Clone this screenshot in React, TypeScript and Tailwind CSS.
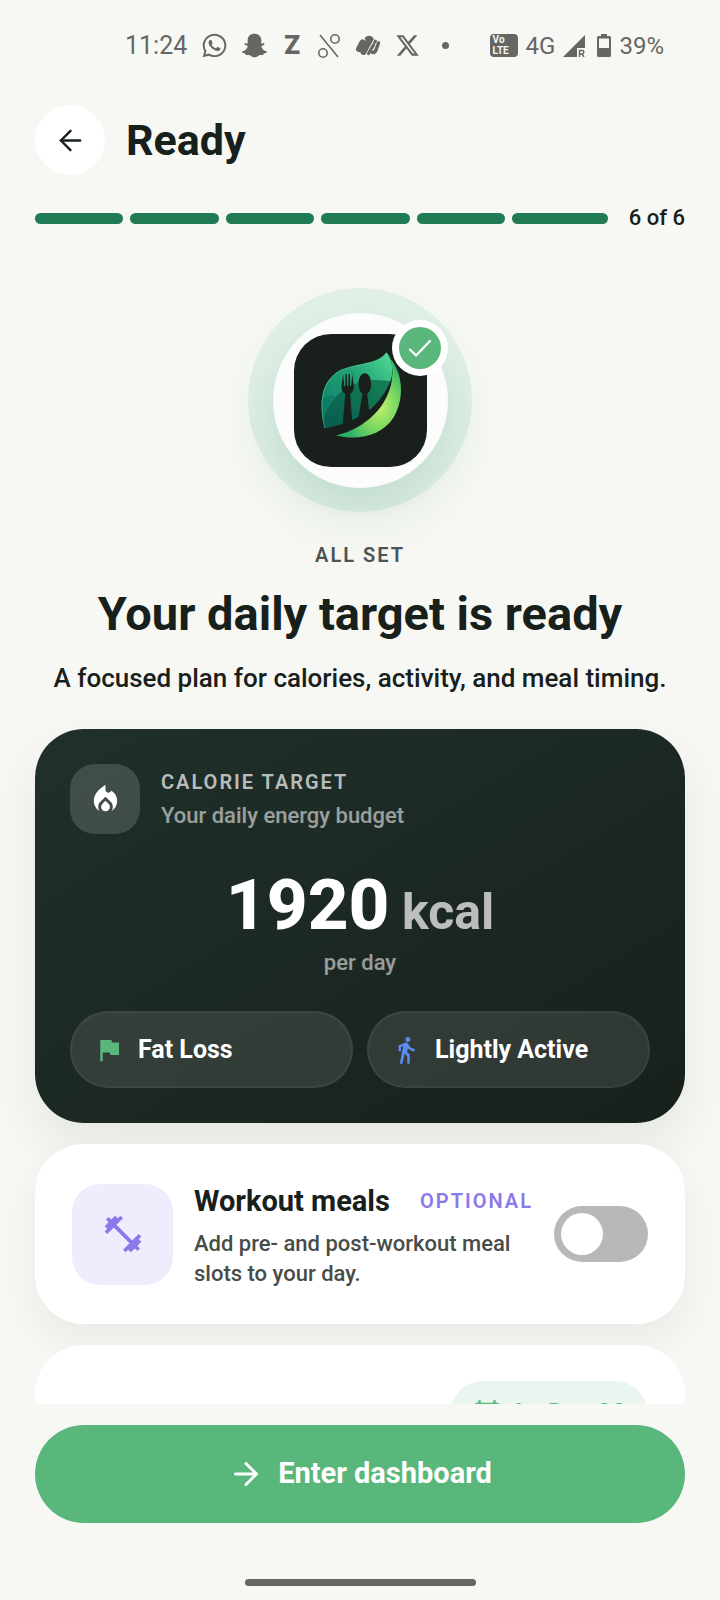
import { useState } from "react"
import type { ReactNode } from "react"
import { ArrowLeft, ArrowRight } from "lucide-react"
import { FaSnapchatGhost, FaWhatsapp } from "react-icons/fa"
import { FaXTwitter } from "react-icons/fa6"
import {
  MdDirectionsWalk,
  MdFitnessCenter,
  MdFlag,
  MdLocalFireDepartment,
  MdOutlineCalendarToday,
} from "react-icons/md"

const TOTAL_STEPS = 6
const CURRENT_STEP = 6

export default function App() {
  const [workoutMeals, setWorkoutMeals] = useState(false)

  return (
    <div className="flex h-screen flex-col overflow-hidden bg-[#f7f8f3] font-['Roboto',sans-serif] text-[#18201c]">
      <StatusBar />

      <header className="px-[35px] pt-[14px]">
        <div className="flex items-center gap-[21px]">
          <button
            type="button"
            aria-label="Back"
            className="flex size-[70px] items-center justify-center rounded-full bg-white"
          >
            <ArrowLeft size={33} strokeWidth={1.75} />
          </button>
          <h1 className="text-[43px] leading-[54px] font-bold">Ready</h1>
        </div>

        <div className="mt-[30px] flex items-center gap-[21px]">
          <div className="grid flex-1 grid-cols-6">
            {Array.from({ length: TOTAL_STEPS }, (_, index) => (
              <div key={index} className="pr-[7px] last:pr-0">
                <div
                  className={`h-[11px] rounded-full ${index < CURRENT_STEP ? "bg-[#217c56]" : "bg-[#dfe5df]"}`}
                />
              </div>
            ))}
          </div>
          <span className="text-[22px] leading-[26px] font-medium">
            {CURRENT_STEP} of {TOTAL_STEPS}
          </span>
        </div>
      </header>

      <main className="min-h-0 flex-1 overflow-y-auto px-[35px] pt-[57px] [scrollbar-width:none]">
        <section className="flex flex-col items-center text-center">
          <HeroBadge />
          <p className="mt-[29px] text-[20px] leading-7 font-semibold tracking-widest text-[#4f5351]">
            ALL SET
          </p>
          <h2 className="mt-[18px] text-[47px] leading-[54px] font-bold">
            Your daily target is ready
          </h2>
          <p className="mt-5 text-[26px] leading-[34px] font-medium">
            A focused plan for calories, activity, and meal timing.
          </p>
        </section>

        <section className="mt-[34px] rounded-[49px] bg-linear-to-br from-[#20302a] to-[#18201c] p-[35px] text-white shadow-[0_24px_50px_rgba(24,32,28,0.08)]">
          <div className="flex items-center gap-[21px]">
            <span className="flex size-[70px] items-center justify-center rounded-[25px] bg-white/15">
              <MdLocalFireDepartment size={35} />
            </span>
            <div>
              <h3 className="text-[20px] leading-[33px] font-semibold tracking-widest text-white/70">
                CALORIE TARGET
              </h3>
              <p className="text-[22px] leading-[33px] font-medium text-white/55">
                Your daily energy budget
              </p>
            </div>
          </div>

          <p className="mt-9 text-center text-[71px] leading-[70px] font-extrabold">
            1920<span className="text-[50px] leading-none font-bold text-white/70"> kcal</span>
          </p>
          <p className="mt-2 text-center text-[22px] leading-[30px] font-medium text-white/55">
            per day
          </p>

          <div className="mt-[33px] grid grid-cols-2 gap-[14px]">
            <GoalPill
              icon={<MdFlag size={30} className="text-[#59b77b]" />}
              label="Fat Loss"
            />
            <GoalPill
              icon={<MdDirectionsWalk size={30} className="text-[#5b8def]" />}
              label="Lightly Active"
            />
          </div>
        </section>

        <section className="mt-[21px] flex items-center gap-[21px] rounded-[49px] border-2 border-white bg-white px-[35px] py-[33px] shadow-[0_20px_40px_rgba(24,32,28,0.06)]">
          <span className="flex size-[101px] shrink-0 items-center justify-center rounded-[28px] bg-[#efecfd] text-[#8b78ea]">
            <MdFitnessCenter size={44} />
          </span>
          <div className="min-w-0 flex-1 pt-1">
            <div className="flex items-center justify-between">
              <h3 id="workout-label" className="text-[29px] leading-9 font-bold">
                Workout meals
              </h3>
              <span className="text-[20px] leading-[26px] font-semibold tracking-widest text-[#8b78ea]">
                OPTIONAL
              </span>
            </div>
            <p className="mt-[10px] text-[22px] leading-[30px] font-medium text-[#474c49]">
              Add pre- and post-workout meal slots to your day.
            </p>
          </div>
          <button
            type="button"
            role="switch"
            aria-checked={workoutMeals}
            aria-labelledby="workout-label"
            onClick={() => setWorkoutMeals(!workoutMeals)}
            className={`flex h-14 w-[94px] shrink-0 items-center rounded-full px-[7px] ${workoutMeals ? "justify-end bg-[#59b77b]" : "justify-start bg-[#b7b9b7]"}`}
          >
            <span className="size-[42px] rounded-full bg-white" />
          </button>
        </section>

        <section className="mt-[21px] flex justify-end rounded-[49px] border-2 border-white bg-white px-[35px] pt-[34px] pb-[120px]">
          <span className="flex h-[66px] items-center gap-[14px] rounded-full bg-[#e9f5ee] px-[22px] text-[25px] font-bold text-[#59b77b]">
            <MdOutlineCalendarToday size={30} />
            by Dec 30
          </span>
        </section>
      </main>

      <footer className="px-[35px] pt-[21px] pb-[14px]">
        <button
          type="button"
          className="flex h-[98px] w-full items-center justify-center gap-[14px] rounded-full bg-[#59b77b] text-[29px] font-bold text-white"
        >
          <ArrowRight size={36} />
          Enter dashboard
        </button>
        <div className="mx-auto mt-14 h-[7px] w-[231px] rounded-full bg-[#666764]" />
      </footer>
    </div>
  )
}

function GoalPill({ icon, label }: { icon: ReactNode; label: string }) {
  return (
    <div className="flex h-[77px] items-center gap-[14px] rounded-full border-2 border-white/5 bg-white/10 px-[22px]">
      {icon}
      <span className="text-[25px] leading-8 font-bold">{label}</span>
    </div>
  )
}

function HeroBadge() {
  return (
    <div className="flex size-56 items-center justify-center rounded-full bg-linear-to-b from-[#e1f0e6] to-[#d6e9dd] shadow-[0_20px_40px_rgba(33,124,86,0.06)]">
      <div className="relative flex size-[175px] items-center justify-center rounded-full bg-[#fbfcfb] shadow-[0_14px_28px_rgba(33,124,86,0.10)]">
        <LeafLogo />
        <span className="absolute top-[7px] right-0 flex size-14 items-center justify-center rounded-full bg-white">
          <span className="flex size-[42px] items-center justify-center rounded-full bg-[#59b77b]">
            <svg viewBox="0 0 24 18" className="w-6" fill="none" stroke="white" strokeWidth="2.3" strokeLinecap="round" strokeLinejoin="round">
              <path d="M2 10.5 8 16.5 22 2" />
            </svg>
          </span>
        </span>
      </div>
    </div>
  )
}

function LeafLogo() {
  return (
    <svg viewBox="0 0 400 400" className="size-[133px] rounded-[37px] bg-[#19201c]">
      <defs>
        <linearGradient id="leaf" x1="0.9" y1="0.1" x2="0.1" y2="0.9">
          <stop offset="0" stopColor="#4fd692" />
          <stop offset="0.4" stopColor="#21a376" />
          <stop offset="1" stopColor="#0f7d66" />
        </linearGradient>
        <linearGradient id="shade" x1="0.9" y1="0" x2="0.1" y2="1">
          <stop offset="0" stopColor="#158055" />
          <stop offset="1" stopColor="#07594f" />
        </linearGradient>
        <radialGradient id="blade" cx="0.66" cy="0.62" r="0.55">
          <stop offset="0" stopColor="#c2f06c" />
          <stop offset="0.5" stopColor="#7bd962" />
          <stop offset="1" stopColor="#2fb068" />
        </radialGradient>
        <clipPath id="leaf-body">
          <path d="M93 284C76 228 76 156 122 120C166 84 252 98 278 55C294 76 300 98 292 138C262 214 206 262 93 284Z" />
        </clipPath>
      </defs>
      <g clipPath="url(#leaf-body)">
        <rect x="70" y="40" width="240" height="260" fill="url(#leaf)" />
        <path d="M86 264C100 210 140 152 220 140C250 136 280 140 310 146V300H80Z" fill="url(#shade)" />
        <path d="M80 200C90 190 110 184 124 188C100 210 90 240 86 270Z" fill="#0f7d66" />
      </g>
      <path d="M93 283C79 228 77 157 123 121C167 86 250 98 277 57" fill="none" stroke="#5fdca5" strokeWidth="2" opacity="0.7" />
      <g fill="#19201c">
        <path d="M148 120 151 157H154L155 120H159L160 157H163L164 120H168L169 157H172L175 120 180 156C181 168 177 176 169 180L177 290H145L154 180C146 176 142 168 143 156Z" />
        <path d="M213 118C225 118 232 134 232 150C232 164 227 175 220 180L230 262H192L206 180C199 175 194 164 194 150C194 134 201 118 213 118Z" />
        <path d="M292 136C262 214 206 262 93 284L126 306C230 292 296 216 300 130Z" />
      </g>
      <path d="M284 68C328 112 334 194 300 250C264 306 194 321 126 305C216 284 286 216 295 132C299 106 292 84 284 68Z" fill="url(#blade)" />
      <path d="M278 55C300 84 302 110 294 142C306 108 300 88 278 55Z" fill="#4fd692" />
    </svg>
  )
}

function StatusBar() {
  return (
    <div className="flex h-[91px] shrink-0 items-center justify-between pr-14 pl-[125px] text-[25px] text-[#666764]">
      <div className="flex items-center gap-[14px]">
        <span>11:24</span>
        <FaWhatsapp size={27} />
        <FaSnapchatGhost size={25} />
        <span className="w-[22px] text-center text-[26px] font-black">Z</span>
        <svg viewBox="0 0 24 24" className="size-6" fill="none" stroke="currentColor" strokeWidth="1.6">
          <path d="M3 1 21 23" />
          <circle cx="18" cy="5" r="4.2" />
          <circle cx="6" cy="19" r="4.2" />
        </svg>
        <svg viewBox="0 0 26 24" className="h-6 w-[26px]" fill="none" stroke="currentColor" strokeLinecap="round" strokeLinejoin="round">
          <path d="M4 15 7.5 8.5" strokeWidth="6" />
          <path d="M8.5 18 14 6" strokeWidth="6" />
          <path d="M11.5 4.5Q15 2.5 17 5L11 15.5" strokeWidth="3.5" />
          <path d="M13.5 19.5 18.5 11" strokeWidth="3.2" />
          <path d="M17.5 18.5Q20 18.5 21 16L23.5 9" strokeWidth="3.5" />
          <path d="M19.5 8.5 20.5 7" strokeWidth="3" />
        </svg>
        <FaXTwitter size={25} />
        <span className="ml-2 size-[7px] rounded-full bg-current" />
      </div>

      <div className="flex items-center gap-2 text-[24px]">
        <span className="flex h-[23px] w-7 flex-col rounded-[4px] bg-[#666764] pl-[3px] text-[10px] leading-[11px] font-bold text-[#f7f8f3]">
          <span>Vo</span>
          <span>LTE</span>
        </span>
        <span>4G</span>
        <svg viewBox="0 0 22 22" className="size-[22px]">
          <path d="M22 0V13H14V22H0Z" fill="currentColor" />
          <path d="M16.5 22V15.5H19.5A1.8 1.8 0 0 1 19.5 19H16.5M19 19 21 22" fill="none" stroke="currentColor" strokeWidth="1.4" />
        </svg>
        <svg viewBox="0 0 14 23" className="ml-1 h-[23px] w-[14px]" fill="currentColor">
          <path fillRule="evenodd" d="M4 0H10V2H12.5Q14 2 14 3.5V21.5Q14 23 12.5 23H1.5Q0 23 0 21.5V3.5Q0 2 1.5 2H4ZM2 4.5V14H12V4.5Z" />
        </svg>
        <span>39%</span>
      </div>
    </div>
  )
}
